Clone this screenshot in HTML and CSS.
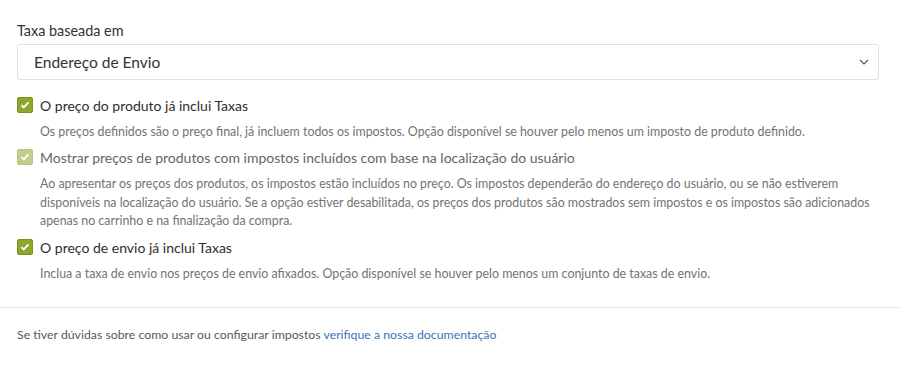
FILE: index.html
```html
<!DOCTYPE html>
<html lang="pt">
<head>
<meta charset="utf-8">
<link rel="stylesheet" href="styles.css">
</head>
<body>
<div class="panel">
  <div class="body">
    <label class="field-label">Taxa baseada em</label>
    <div class="select">
      <span>Endereço de Envio</span>
      <svg class="chev" width="10" height="6" viewBox="0 0 10 6"><path d="M1 1l4 4 4-4" fill="none" stroke="#555" stroke-width="1.1"/></svg>
    </div>
    <div class="option">
      <div class="check-row">
        <span class="box"><svg width="10" height="8" viewBox="0 0 10 8"><path d="M1.5 4.2l2.3 2.2 4.7-5" fill="none" stroke="#fff" stroke-width="1.8"/></svg></span>
        <span class="label">O preço do produto já inclui Taxas</span>
      </div>
      <p class="desc">Os preços definidos são o preço final, já incluem todos os impostos. Opção disponível se houver pelo menos um imposto de produto definido.</p>
    </div>
    <div class="option disabled">
      <div class="check-row">
        <span class="box"><svg width="10" height="8" viewBox="0 0 10 8"><path d="M1.5 4.2l2.3 2.2 4.7-5" fill="none" stroke="#fff" stroke-width="1.8"/></svg></span>
        <span class="label">Mostrar preços de produtos com impostos incluídos com base na localização do usuário</span>
      </div>
      <p class="desc">Ao apresentar os preços dos produtos, os impostos estão incluídos no preço. Os impostos dependerão do endereço do usuário, ou se não estiverem disponíveis na localização do usuário. Se a opção estiver desabilitada, os preços dos produtos são mostrados sem impostos e os impostos são adicionados apenas no carrinho e na finalização da compra.</p>
    </div>
    <div class="option">
      <div class="check-row">
        <span class="box"><svg width="10" height="8" viewBox="0 0 10 8"><path d="M1.5 4.2l2.3 2.2 4.7-5" fill="none" stroke="#fff" stroke-width="1.8"/></svg></span>
        <span class="label">O preço de envio já inclui Taxas</span>
      </div>
      <p class="desc">Inclua a taxa de envio nos preços de envio afixados. Opção disponível se houver pelo menos um conjunto de taxas de envio.</p>
    </div>
  </div>
  <div class="footer">
    Se tiver dúvidas sobre como usar ou configurar impostos <a href="#">verifique a nossa documentação</a>
  </div>
</div>
</body>
</html>
```
FILE: styles.css
```css
html, body {
  margin: 0;
  padding: 0;
  background: #fff;
}
body {
  font-family: "Lato", "Liberation Sans", sans-serif;
  color: #333;
}
.body {
  padding: 21px 21px 17px 17px;
}
.field-label {
  display: block;
  font-size: 14.4px;
  line-height: 20px;
  color: #333;
  margin-bottom: 3px;
}
.select {
  height: 34px;
  border: 1px solid #dcdfe3;
  border-radius: 3px;
  display: flex;
  align-items: center;
  justify-content: space-between;
  padding: 0 9px 0 16px;
  font-size: 15.5px;
  color: #333;
  margin-bottom: 16px;
}
.chev { display: block; }
.option { margin-bottom: 7px; }
.check-row {
  display: flex;
  align-items: center;
  gap: 7px;
  height: 18px;
}
.box {
  width: 14px;
  height: 14px;
  border: 1px solid #7b9320;
  border-radius: 2px;
  background: #8ca72c;
  display: flex;
  align-items: center;
  justify-content: center;
  flex: none;
}
.box svg { display: block; }
.label {
  font-size: 14px;
  color: #2e2e2e;
}
.disabled .box { opacity: 0.55; }
.disabled .label { color: #666; }
.desc {
  margin: 8.5px 0 0 23px;
  font-size: 12.4px;
  line-height: 18.75px;
  color: #737373;
}
.footer {
  border-top: 1px solid #e8e8e8;
  padding: 19px 17px;
  font-size: 12.3px;
  color: #595959;
}
.footer a {
  color: #3a73b3;
  text-decoration: none;
}
```
